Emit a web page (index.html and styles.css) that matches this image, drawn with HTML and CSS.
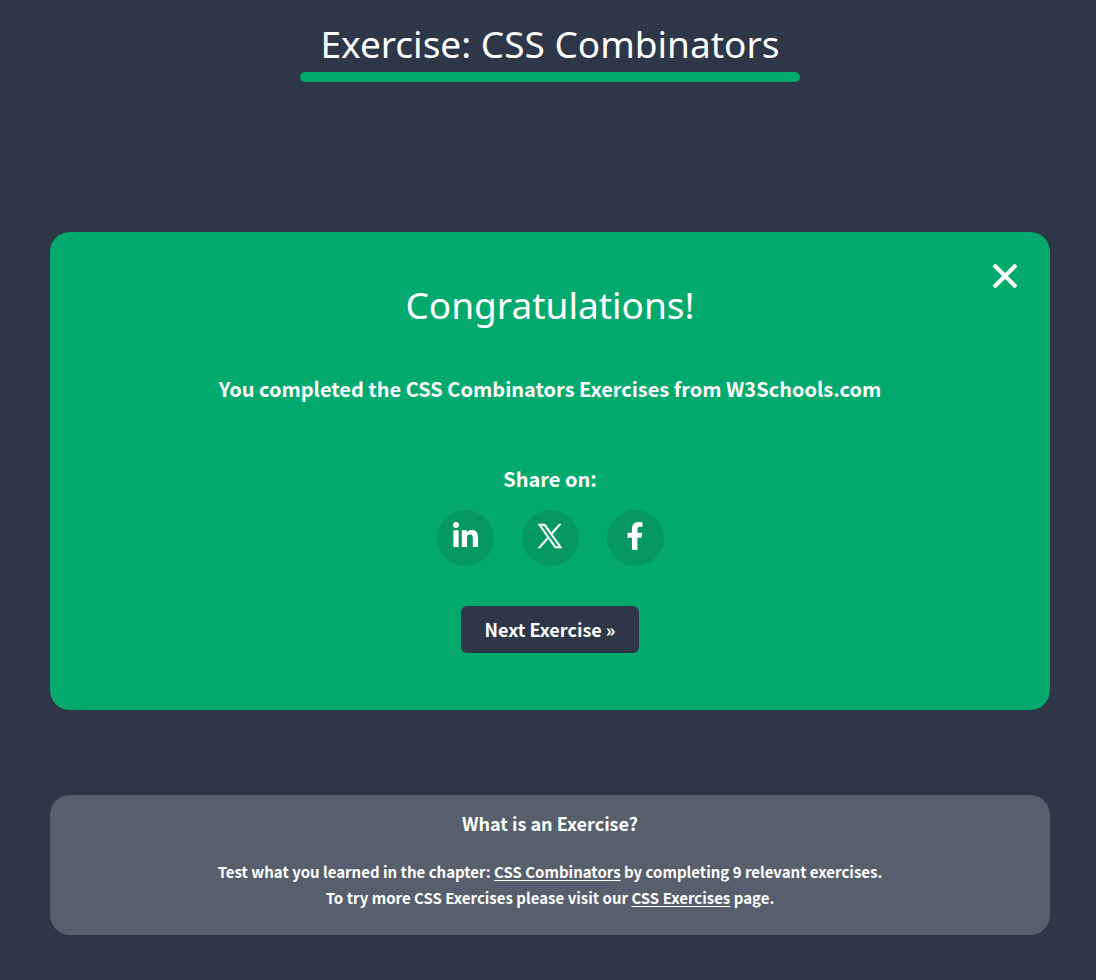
FILE: index.html
```html
<!DOCTYPE html>
<html lang="en">
<head>
<meta charset="utf-8">
<meta name="viewport" content="width=device-width, initial-scale=1">
<title>Exercise: CSS Combinators</title>
<link rel="stylesheet" href="styles.css">
</head>
<body>
<header class="page-header">
  <h1 class="title">Exercise: CSS Combinators</h1>
  <div class="progress"></div>
</header>
<main class="content">
  <section class="card">
    <button class="close" type="button" aria-label="Close">
      <svg width="26" height="26" viewBox="0 0 26 26" fill="none" stroke="#fff" stroke-width="4"><path d="M2 2L24 24M24 2L2 24"/></svg>
    </button>
    <h2 class="title">Congratulations!</h2>
    <p class="lead">You completed the CSS Combinators Exercises from W3Schools.com</p>
    <p class="share-label">Share on:</p>
    <div class="share">
      <a class="share-link" href="#" aria-label="LinkedIn">
        <svg width="25" height="27" viewBox="0 0 448 484" fill="#fff"><path d="M100 448H7V149h93zM54 108C24 108 0 83 0 54a54 54 0 0 1 108 0c0 29-24 54-54 54zM448 448h-93V302c0-34-1-79-48-79-49 0-56 38-56 77v148h-93V149h89v41h1c13-24 43-48 88-48 94 0 112 62 112 142z"/></svg>
      </a>
      <a class="share-link" href="#" aria-label="X">
        <svg width="26" height="26" viewBox="0 0 24 24" fill="#fff" stroke="#fff" stroke-width=".6"><path d="M14.1 10.3L22.3 1h-2l-7.100 8.100L7.600 1H1l8.600 12.200L1 23h2l7.500-8.600L16.400 23H23zM11.400 13.300l-.9-1.200L3.700 2.500h3l5.600 7.800.9 1.200 7.200 10.100h-3z"/></svg>
      </a>
      <a class="share-link" href="#" aria-label="Facebook">
        <svg width="18" height="28" viewBox="0 0 320 512" fill="#fff"><path d="M279 288l14-93h-89v-60c0-25 12-50 52-50h41V7s-37-7-72-7c-73 0-121 44-121 125v70H23v93h81v224h100V288z"/></svg>
      </a>
    </div>
    <a class="next" href="#">Next Exercise »</a>
  </section>
  <section class="info">
    <h3 class="info-title">What is an Exercise?</h3>
    <p class="info-text">Test what you learned in the chapter: <a href="#">CSS Combinators</a> by completing 9 relevant exercises.<br>To try more CSS Exercises please visit our <a href="#">CSS Exercises</a> page.</p>
  </section>
</main>
</body>
</html>
```
FILE: styles.css
```css
* { box-sizing: border-box; }

body {
  margin: 0;
  padding: 14px 46px 45px 50px;
  background: #2d3748;
  color: #fff;
  font-family: "Noto Sans CJK JP", "Noto Sans", sans-serif;
  font-weight: 700;
  text-align: center;
}

h1, h2, h3, p { margin: 0; }

.title {
  font: 400 37px/60px "Noto Sans", "Open Sans", sans-serif;
}

.page-header,
.content {
  max-width: 1000px;
  margin: 0 auto;
}

.progress {
  max-width: 500px;
  height: 10px;
  margin: -2px auto 150px;
  border-radius: 5px;
  background: #04aa6d;
}

.card {
  position: relative;
  padding: 43px 24px 57px;
  border-radius: 20px;
  background: #04aa6d;
}

.close {
  position: absolute;
  top: 31px;
  right: 32px;
  padding: 0;
  border: 0;
  background: none;
  cursor: pointer;
}

.close svg,
.share-link svg { display: block; }

.lead,
.share-label {
  font-size: 20px;
  line-height: 32px;
}

.lead { margin-top: 38px; }
.share-label { margin-top: 58px; }

.share {
  display: flex;
  justify-content: center;
  gap: 28px;
  margin: 15px 0 40px;
}

.share-link {
  display: flex;
  align-items: center;
  justify-content: center;
  width: 57px;
  height: 56px;
  padding-bottom: 5px;
  border-radius: 50%;
  background: #059862;
}

.next {
  display: inline-block;
  padding: 0 24px;
  border-radius: 6px;
  background: #2d3748;
  color: #fff;
  font-size: 18px;
  line-height: 47px;
  text-decoration: none;
  vertical-align: top;
}

.info {
  margin-top: 85px;
  padding: 15px 24px 24px;
  border-radius: 20px;
  background: #575f6d;
}

.info-title {
  margin-bottom: 23px;
  font-size: 18px;
  line-height: 26px;
}

.info-text {
  font-size: 15px;
  line-height: 26px;
}

.info-text a {
  color: #fff;
  text-underline-offset: 2px;
}
```
